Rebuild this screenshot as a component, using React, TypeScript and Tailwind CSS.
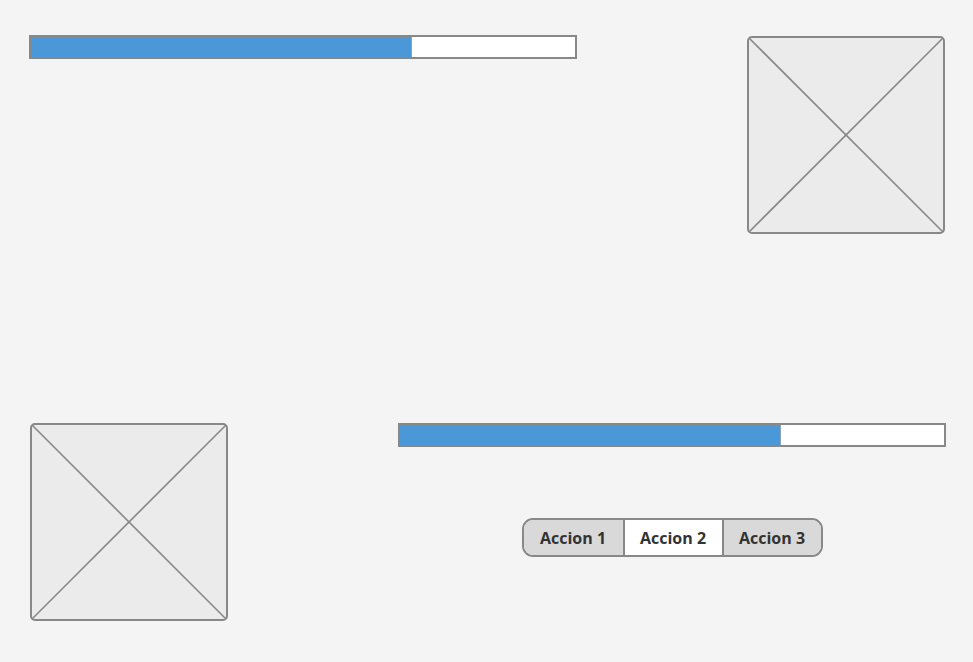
const font = { fontFamily: '"Open Sans", "Liberation Sans", sans-serif' }

function Placeholder() {
  return (
    <svg width="198" height="198" viewBox="0 0 198 198" className="block">
      <rect x="1" y="1" width="196" height="196" rx="4" fill="#ebebeb" stroke="#888888" strokeWidth="2" />
      <line x1="2" y1="2" x2="196" y2="196" stroke="#888888" strokeWidth="1.6" />
      <line x1="196" y1="2" x2="2" y2="196" stroke="#888888" strokeWidth="1.6" />
    </svg>
  )
}

function Progress({ className = '' }: { className?: string }) {
  return (
    <div className={`flex h-[24px] w-[548px] border-2 border-[#888888] bg-white ${className}`}>
      <div className="h-full w-[381px] border-r border-[#8aa4bb] bg-[#4a98d8]" />
    </div>
  )
}

export default function App() {
  const actions = ['Accion 1', 'Accion 2', 'Accion 3']
  return (
    <div className="h-[662px] w-[973px] overflow-hidden bg-[#f4f4f4]">
      {/* Top row */}
      <div className="flex items-start justify-between pl-[29px] pr-[28px] pt-[35px]">
        <Progress />
        <div className="mt-[1px]">
          <Placeholder />
        </div>
      </div>

      {/* Bottom row */}
      <div className="mt-[189px] flex items-start pl-[30px]">
        <Placeholder />
        <div className="ml-[170px] flex w-[548px] flex-col items-center">
          <Progress className="h-[23px]" />
          <div
            className="mt-[71px] flex h-[39px] overflow-hidden rounded-[11px] border-2 border-[#888888] text-[16px] font-bold text-[#333333]"
            style={font}
          >
            {actions.map((a, i) => (
              <div
                key={a}
                className={`flex w-[99px] items-center justify-center ${i === 1 ? 'bg-white' : 'bg-[#d9d9d9]'} ${i > 0 ? 'border-l-2 border-[#888888]' : ''}`}
              >
                {a}
              </div>
            ))}
          </div>
        </div>
      </div>
    </div>
  )
}
